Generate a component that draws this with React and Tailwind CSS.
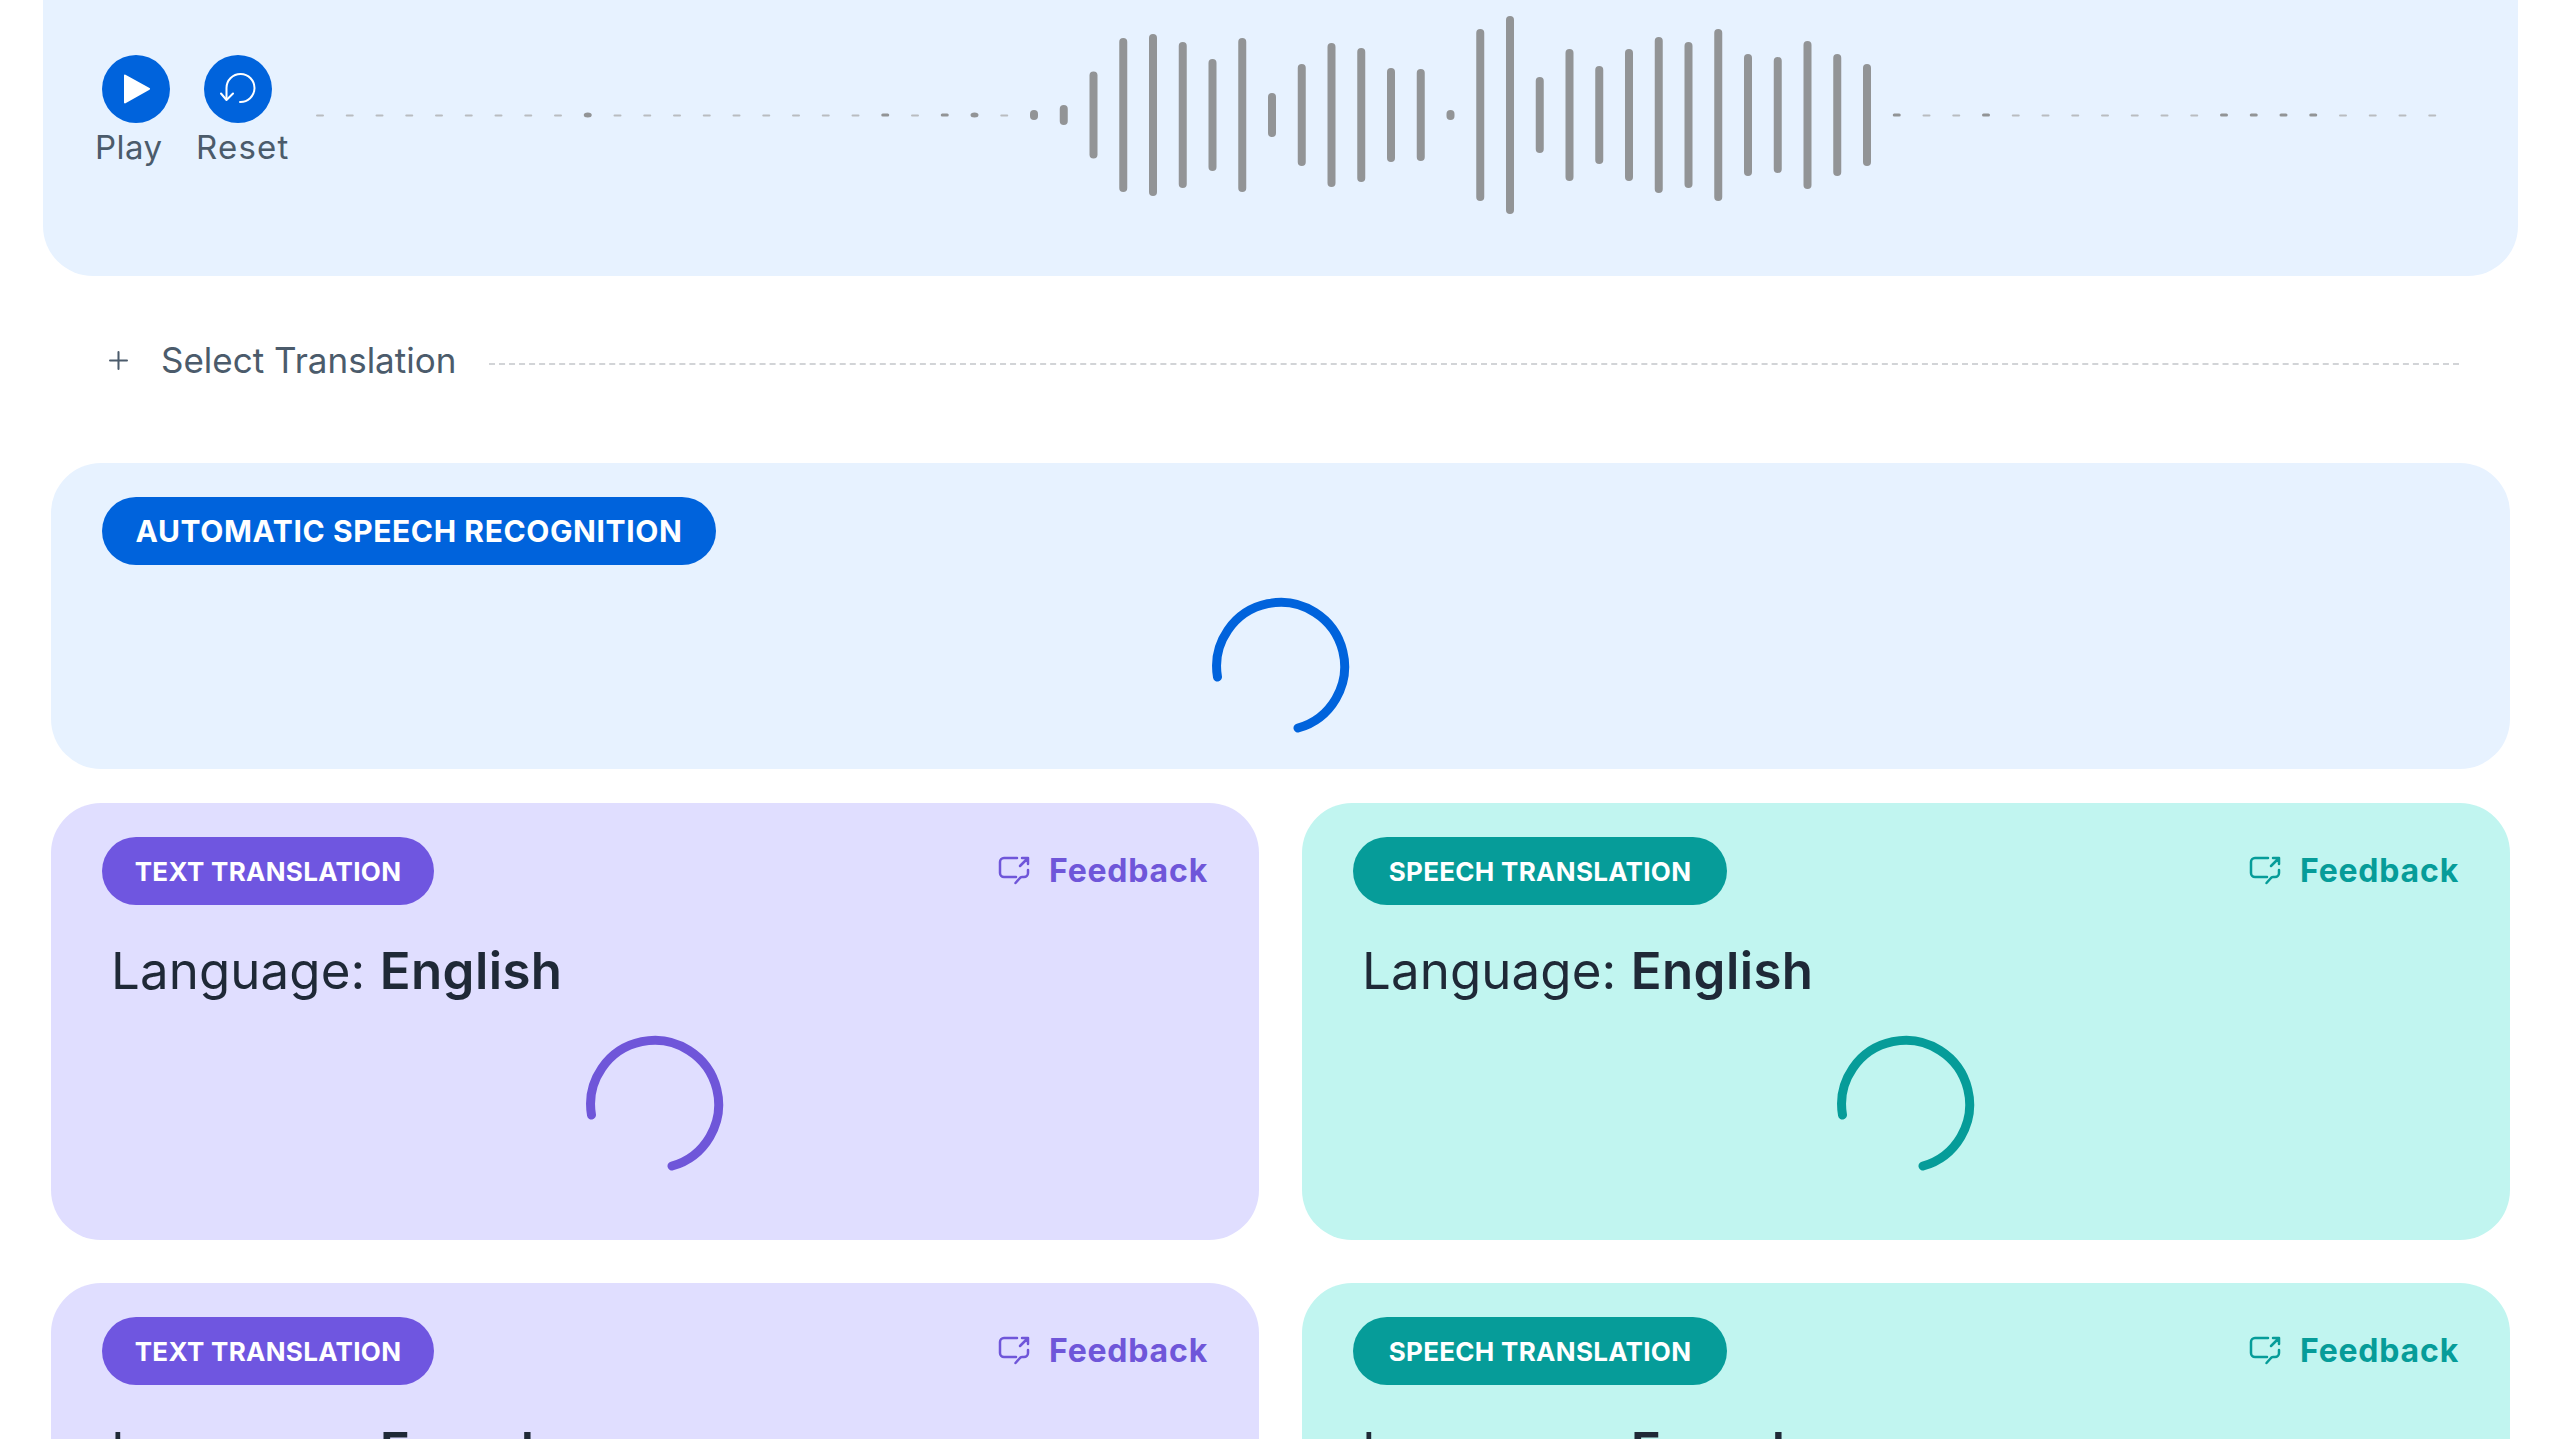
import React from 'react';
import { Plus } from 'lucide-react';

const font = 'font-["Inter","Liberation_Sans",sans-serif]';

// bar heights of the wave form, one slot every 29.75px (0 = faint dash)
const leftDashes = [0, 0, 0, 0, 0, 0, 0, 0, 0, 5, 0, 0, 0, 0, 0, 0, 0, 0, 0, 3, 0, 3, 5, 0];
const bars = [10, 20, 87, 154, 162, 146, 112, 154, 44, 102, 144, 134, 94, 92, 10, 172, 198, 76, 132, 98, 132, 156, 146, 172, 122, 116, 148, 122, 102];
const rightDashes = [3, 0, 0, 3, 0, 0, 0, 0, 0, 0, 0, 3, 3, 3, 3, 0, 0, 0, 0];
const slots = [...leftDashes, ...bars, ...rightDashes];

const Waveform = () => (
  <svg width="2130" height="220" viewBox="0 0 2130 220" className="shrink-0">
    {slots.map((h, i) => {
      const x = 4 + i * 29.75;
      if (h === 0) {
        return <rect key={i} x={x - 4} y="109.5" width="8" height="2" rx="1" fill="#b9bcc0" />;
      }
      return <rect key={i} x={x - 4} y={110 - h / 2} width="8" height={h} rx={h < 4 ? 1.5 : 4} fill="#929496" />;
    })}
  </svg>
);

const Spinner = ({ color }) => (
  <svg width="140" height="140" viewBox="0 0 140 140" fill="none" className={color}>
    <path d="M6.5 81 A64 64 0 1 1 87 132" stroke="currentColor" strokeWidth="9" strokeLinecap="round" />
  </svg>
);

const FeedbackIcon = () => (
  <svg width="32" height="30" viewBox="0 0 32 30" fill="none" stroke="currentColor" strokeWidth="2.5" strokeLinecap="round" strokeLinejoin="round">
    <path d="M19 2H6a4 4 0 0 0-4 4V17a4 4 0 0 0 4 4H18" />
    <path d="M22 10L30 2M24 2H30V8" />
    <path d="M30 14V17a4 4 0 0 1-4 4H24Q22.5 21 21.5 22.5L17.5 27" />
  </svg>
);

const TranslationCard = ({ label, bg, pill, text, spinner, language, pillWidth }) => (
  <div className={`${bg} rounded-[50px] px-[51px] pt-[34px] h-[437px] flex flex-col`}>
    <div className="flex items-center justify-between">
      <span className={`${pill} ${pillWidth} h-[68px] rounded-full flex items-center justify-center text-white text-[26px] tracking-[0.3px] font-bold`}>
        {label}
      </span>
      <button className={`flex items-center gap-[19px] text-[32px] tracking-[0.8px] font-bold ${text}`}>
        <FeedbackIcon />
        Feedback
      </button>
    </div>
    <div className="mt-[34px] ml-[9px] text-[51px] leading-[64px] font-normal text-[#1f2937] tracking-[0.1px]">
      Language: <span className="font-semibold tracking-[0.4px]">{language}</span>
    </div>
    <div className="flex justify-center mt-[31px]">
      <Spinner color={spinner} />
    </div>
  </div>
);

const App = () => {
  return (
    <div className={`${font} w-[2558px] h-[1439px] overflow-hidden bg-white`}>
      {/* Lecteur audio */}
      <div className="ml-[43px] mr-[40px] h-[276px] bg-[#e7f2ff] rounded-b-[50px] flex items-start">
        <div className="flex gap-[32px] ml-[59px] mt-[55px] shrink-0">
          <div className="flex flex-col items-start w-[70px]">
            <button className="w-[68px] h-[68px] rounded-full bg-[#0063dc] flex items-center justify-center">
              <svg width="28" height="30" viewBox="0 0 28 30" className="ml-[2px]">
                <path d="M1 1.5a1 1 0 0 1 1.5-.8l24 13.2a1 1 0 0 1 0 1.8l-24 13.6a1 1 0 0 1-1.5-.9z" fill="#fff" />
              </svg>
            </button>
            <span className="-ml-[7px] mt-[4px] text-[33px] tracking-[0.5px] leading-[40px] text-[#4b5b6b]">Play</span>
          </div>
          <div className="flex flex-col items-start w-[94px]">
            <button className="w-[68px] h-[68px] rounded-full bg-[#0063dc] flex items-center justify-center">
              <svg width="36" height="32" viewBox="0 0 36 32" fill="none" stroke="#fff" strokeWidth="2" strokeLinecap="round" strokeLinejoin="round">
                <path d="M6.5 26V15A14 14 0 1 1 20 29" />
                <path d="M1 20.5L6.5 27L13 20.5" />
              </svg>
            </button>
            <span className="-ml-[8px] mt-[4px] text-[33px] tracking-[1.2px] leading-[40px] text-[#4b5b6b]">Reset</span>
          </div>
        </div>
        <div className="ml-[18px] mt-[5px]">
          <Waveform />
        </div>
      </div>

      {/* Select Translation */}
      <div className="flex items-center ml-[104px] mr-[99px] mt-[55px] h-[58px]">
        <Plus size={29} strokeWidth={1.7} className="text-[#4b5b6b] shrink-0" />
        <span className="ml-[28px] text-[35px] leading-[58px] text-[#4b5b6b] whitespace-nowrap">Select Translation</span>
        <div className="ml-[33px] flex-1 border-t-2 border-dashed border-[#d2d4d7] mt-[7px]" />
      </div>

      <div className="ml-[51px] mr-[48px] mt-[74px]">
        {/* ASR */}
        <div className="bg-[#e7f2ff] rounded-[50px] h-[306px] px-[51px] pt-[34px]">
          <span className="inline-flex items-center justify-center w-[614px] h-[68px] rounded-full bg-[#0063dc] text-white text-[30px] tracking-[0.6px] font-bold">
            AUTOMATIC SPEECH RECOGNITION
          </span>
          <div className="flex justify-center mt-[31px]">
            <Spinner color="text-[#0063dc]" />
          </div>
        </div>

        {/* Traductions */}
        <div className="grid grid-cols-2 gap-x-[43px] gap-y-[43px] mt-[34px]">
          <TranslationCard label="TEXT TRANSLATION" language="English" bg="bg-[#e0deff]" pill="bg-[#6f56e0]" text="text-[#6f56d9]" spinner="text-[#6f56d9]" pillWidth="w-[332px]" />
          <TranslationCard label="SPEECH TRANSLATION" language="English" bg="bg-[#c1f5f0]" pill="bg-[#069c99]" text="text-[#069c99]" spinner="text-[#069c99]" pillWidth="w-[374px]" />
          <TranslationCard label="TEXT TRANSLATION" language="French" bg="bg-[#e0deff]" pill="bg-[#6f56e0]" text="text-[#6f56d9]" spinner="text-[#6f56d9]" pillWidth="w-[332px]" />
          <TranslationCard label="SPEECH TRANSLATION" language="French" bg="bg-[#c1f5f0]" pill="bg-[#069c99]" text="text-[#069c99]" spinner="text-[#069c99]" pillWidth="w-[374px]" />
        </div>
      </div>
    </div>
  );
};

export default App;
